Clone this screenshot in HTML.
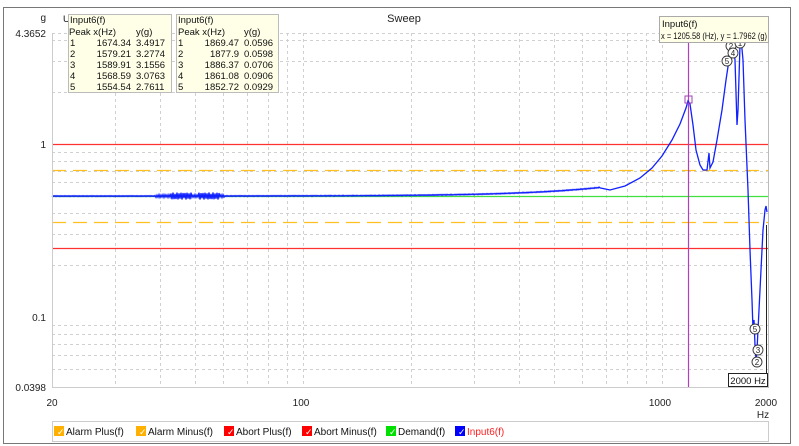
<!DOCTYPE html>
<html><head><meta charset="utf-8"><style>
html,body{margin:0;padding:0;background:#fff;width:799px;height:446px;overflow:hidden;font-family:"Liberation Sans",sans-serif;}
svg text{font-family:"Liberation Sans",sans-serif;}
</style></head><body>
<svg id="s" width="799" height="446" viewBox="0 0 799 446" xmlns="http://www.w3.org/2000/svg">
<rect x="0" y="0" width="799" height="446" fill="#fff"/>
<rect x="3.5" y="7.5" width="787" height="436" fill="#fff" stroke="#777"/>
<g id="grid" stroke="#d0d0d0" stroke-dasharray="3,3" stroke-width="1"></g>
<text x="404" y="22" font-size="11" text-anchor="middle" fill="#222">Sweep</text>
<line x1="52" y1="144.5" x2="768" y2="144.5" stroke="#ff3030" stroke-width="1.3"/>
<line x1="52" y1="248.5" x2="768" y2="248.5" stroke="#ff3030" stroke-width="1.3"/>
<line x1="52" y1="170.5" x2="768" y2="170.5" stroke="#ffc020" stroke-width="1.3" stroke-dasharray="14,7"/>
<line x1="52" y1="222.5" x2="768" y2="222.5" stroke="#ffc020" stroke-width="1.3" stroke-dasharray="14,7"/>
<line x1="52" y1="196.5" x2="768" y2="196.5" stroke="#40e040" stroke-width="1.3"/>
<line x1="688.5" y1="33" x2="688.5" y2="387" stroke="#b040c0" stroke-width="1.2"/>
<path id="curve" fill="none" stroke="#1020ff" stroke-width="1.3" d=""/>
<rect x="685" y="96" width="7" height="7" fill="none" stroke="#a040b0"/>
<line x1="52.5" y1="33" x2="52.5" y2="388" stroke="#ccc"/>
<line x1="52" y1="387.5" x2="768" y2="387.5" stroke="#ccc"/>
<line x1="768.5" y1="33" x2="768.5" y2="388" stroke="#bbb"/>
<g font-size="10" fill="#222" text-anchor="end">
<text x="46" y="21">g</text>
<text x="46" y="37">4.3652</text>
<text x="46" y="148">1</text>
<text x="46" y="321">0.1</text>
<text x="46" y="391">0.0398</text>
</g>
<g font-size="10" fill="#222" text-anchor="middle">
<text x="52" y="406">20</text>
<text x="301" y="406">100</text>
<text x="660" y="406">1000</text>
<text x="766" y="406">2000</text>
<text x="763" y="418">Hz</text>
</g>
<g font-size="8" text-anchor="middle" fill="#222" stroke-width="0.9">
<circle cx="731" cy="46" r="5" fill="#fff" stroke="#333"/><text x="731" y="49">2</text>
<circle cx="733" cy="53" r="5" fill="#fff" stroke="#333"/><text x="733" y="56">4</text>
<circle cx="740" cy="43" r="5" fill="#fff" stroke="#333"/><text x="740" y="46">1</text>
<circle cx="727" cy="61" r="5" fill="#fff" stroke="#333"/><text x="727" y="64">5</text>
<circle cx="755" cy="329" r="5" fill="#fff" stroke="#333"/><text x="755" y="332">5</text>
<circle cx="758" cy="350" r="5" fill="#fff" stroke="#333"/><text x="758" y="353">3</text>
<circle cx="757" cy="362" r="5" fill="#fff" stroke="#333"/><text x="757" y="365">2</text>
</g>
<line x1="766.5" y1="225" x2="766.5" y2="373" stroke="#222"/>
<rect x="728.5" y="373.5" width="39" height="13" fill="#fff" stroke="#222"/>
<text x="748" y="384" font-size="9.5" text-anchor="middle" fill="#111">2000 Hz</text>
<rect x="659.5" y="16.5" width="109" height="26" fill="#ffffe8" stroke="#aaa"/>
<text x="662" y="27" font-size="9.5" fill="#111">Input6(f)</text>
<text x="661" y="39" font-size="9.5" fill="#111" textLength="106" lengthAdjust="spacingAndGlyphs">x = 1205.58 (Hz), y = 1.7962 (g)</text>
<g font-size="9.5" fill="#111">
<text x="63" y="22">U</text>
<rect x="68.5" y="14.5" width="103" height="78" fill="#ffffe8" stroke="#bbb"/>
<text x="70" y="23">Input6(f)</text>
<text x="69" y="35">Peak x(Hz)</text><text x="136" y="35">y(g)</text>
<text x="70" y="46">1</text><text x="131" y="46" text-anchor="end">1674.34</text><text x="136" y="46">3.4917</text>
<text x="70" y="57">2</text><text x="131" y="57" text-anchor="end">1579.21</text><text x="136" y="57">3.2774</text>
<text x="70" y="68">3</text><text x="131" y="68" text-anchor="end">1589.91</text><text x="136" y="68">3.1556</text>
<text x="70" y="79">4</text><text x="131" y="79" text-anchor="end">1568.59</text><text x="136" y="79">3.0763</text>
<text x="70" y="90">5</text><text x="131" y="90" text-anchor="end">1554.54</text><text x="136" y="90">2.7611</text>
<rect x="176.5" y="14.5" width="102" height="78" fill="#ffffe8" stroke="#bbb"/>
<text x="178" y="23">Input6(f)</text>
<text x="178" y="35">Peak x(Hz)</text><text x="244" y="35">y(g)</text>
<text x="178" y="46">1</text><text x="239" y="46" text-anchor="end">1869.47</text><text x="244" y="46">0.0596</text>
<text x="178" y="57">2</text><text x="239" y="57" text-anchor="end">1877.9</text><text x="244" y="57">0.0598</text>
<text x="178" y="68">3</text><text x="239" y="68" text-anchor="end">1886.37</text><text x="244" y="68">0.0706</text>
<text x="178" y="79">4</text><text x="239" y="79" text-anchor="end">1861.08</text><text x="244" y="79">0.0906</text>
<text x="178" y="90">5</text><text x="239" y="90" text-anchor="end">1852.72</text><text x="244" y="90">0.0929</text>
</g>
<rect x="52.5" y="421.5" width="716" height="20" fill="#fff" stroke="#ccc"/>
<g font-size="10" fill="#111">
<rect x="54" y="426" width="10" height="10" fill="#ffb000"/><text x="57" y="435" fill="#fff" font-size="9">✓</text><text x="66" y="435">Alarm Plus(f)</text>
<rect x="136" y="426" width="10" height="10" fill="#ffb000"/><text x="139" y="435" fill="#fff" font-size="9">✓</text><text x="148" y="435">Alarm Minus(f)</text>
<rect x="224" y="426" width="10" height="10" fill="#ff0000"/><text x="227" y="435" fill="#fff" font-size="9">✓</text><text x="236" y="435">Abort Plus(f)</text>
<rect x="302" y="426" width="10" height="10" fill="#ff0000"/><text x="305" y="435" fill="#fff" font-size="9">✓</text><text x="314" y="435">Abort Minus(f)</text>
<rect x="386" y="426" width="10" height="10" fill="#00e000"/><text x="389" y="435" fill="#fff" font-size="9">✓</text><text x="398" y="435">Demand(f)</text>
<rect x="455" y="426" width="10" height="10" fill="#0000ff"/><text x="458" y="435" fill="#fff" font-size="9">✓</text><text x="467" y="435" fill="#ff2020">Input6(f)</text>
</g>
</svg>
<script>
(function(){
var ns="http://www.w3.org/2000/svg",g=document.getElementById("grid");
function X(f){return 52+359*Math.log10(f/20);}
function Y(v){return 144-173*Math.log10(v);}
function L(x1,y1,x2,y2){var l=document.createElementNS(ns,"line");l.setAttribute("x1",x1);l.setAttribute("y1",y1);l.setAttribute("x2",x2);l.setAttribute("y2",y2);g.appendChild(l);}
var fs=[30,40,50,60,70,80,90,100,200,300,400,500,600,700,800,900,1000];
fs.forEach(function(f){var x=Math.round(X(f))+0.5;L(x,33,x,387);});
var vs=[0.05,0.06,0.07,0.08,0.09,0.2,0.3,0.4,0.6,0.7,0.8,0.9,2,3,4];
vs.forEach(function(v){var y=Math.round(Y(v))+0.5;L(52,y,768,y);});
L(52,33.5,768,33.5);
var pts=[],k=0;
for(var x=52;x<=600;x+=1){
 var f=20*Math.pow(10,(x-52)/359);
 var v=0.5*(1+0.00000027*f*f);
 var y=Y(v);
 var amp=0.5;
 if(x>155&&x<225){amp=(x>170&&x<192)||(x>198&&x<220)?3.5:1.5;}
 k++;
 var n=(k%2?1:-1)*amp*(0.6+0.4*Math.abs(Math.sin(x*0.7)));
 pts.push([x,y+n]);
}
var tail=[[610,190],[625,186],[640,178],[652,168],[662,156],[672,140],[680,124],[686,108],[688,101],[690,104],[693,125],[696,150],[700,165],[703,170],[707,170],[709,153],[710,168],[713,162],[717,140],[722,110],[726,80],[729,60],[731,48],[733,40],[735,60],[737,125],[738,110],[740,45],[741,38],[743,60],[745,120],[748,190],[750,250],[752,300],[753,330],[754,320],[755,345],[756,360],[757,350],[759,310],[761,270],[763,230],[765,210],[766,206],[767,212]];
var d="M"+pts.map(function(p){return p[0]+","+p[1].toFixed(1);}).join(" L")+" L"+tail.map(function(p){return p.join(",");}).join(" L");
document.getElementById("curve").setAttribute("d",d);
})();
</script>
</body></html>
